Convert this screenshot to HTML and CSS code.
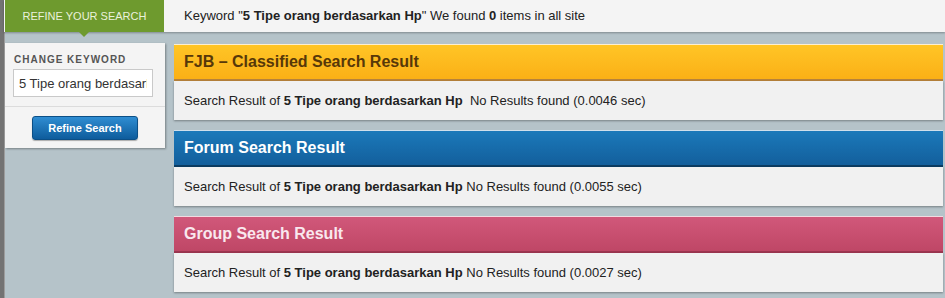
FILE: index.html
```html
<!DOCTYPE html>
<html>
<head>
    <meta charset="utf-8">
    <title>Search Result</title>
    <link rel="stylesheet" href="styles.css">
</head>
<body>
<div class="page">
    <div class="topbar">
        <div class="tab">Refine Your Search</div>
        <div class="summary">Keyword "<b>5 Tipe orang berdasarkan Hp</b>" We found <b>0</b> items in all site</div>
    </div>
    <div class="content">
        <div class="sidebar">
            <div class="keyword-box">
                <h4>Change Keyword</h4>
                <input type="text" value="5 Tipe orang berdasarkan Hp">
            </div>
            <div class="button-row">
                <button>Refine Search</button>
            </div>
        </div>
        <div class="results">
            <div class="result fjb">
                <h2>FJB &ndash; Classified Search Result</h2>
                <p>Search Result of <b>5 Tipe orang berdasarkan Hp</b>&nbsp; No Results found (0.0046 sec)</p>
            </div>
            <div class="result forum">
                <h2>Forum Search Result</h2>
                <p>Search Result of <b>5 Tipe orang berdasarkan Hp</b> No Results found (0.0055 sec)</p>
            </div>
            <div class="result group">
                <h2>Group Search Result</h2>
                <p>Search Result of <b>5 Tipe orang berdasarkan Hp</b> No Results found (0.0027 sec)</p>
            </div>
        </div>
    </div>
</div>
</body>
</html>
```

FILE: styles.css
```css
html, body {
    margin: 0;
    padding: 0;
    height: 100%;
}

body {
    background: #b5c3c9;
    font-family: "Liberation Sans", Arial, sans-serif;
    font-size: 13px;
    color: #222;
    overflow: hidden;
}

.page {
    min-height: 100%;
    border-left: 4px solid #737373;
    box-shadow: inset 1px 0 0 #9c9c9c;
}

/* top bar */
.topbar {
    display: flex;
    height: 32px;
    background: #f4f4f4;
    box-shadow: 0 1px 2px rgba(0, 0, 0, 0.3);
    position: relative;
    z-index: 2;
}

.tab {
    width: 159px;
    margin-left: 1px;
    background: #6e9a2e;
    color: #eaf1dc;
    font-size: 11px;
    text-transform: uppercase;
    text-align: center;
    line-height: 32px;
    position: relative;
}

.tab:after {
    content: "";
    position: absolute;
    left: 74px;
    bottom: -5px;
    border-left: 5px solid transparent;
    border-right: 5px solid transparent;
    border-top: 5px solid #6e9a2e;
}

.summary {
    padding-left: 20px;
    line-height: 32px;
}

/* content */
.content {
    display: flex;
    align-items: flex-start;
    gap: 9px;
    padding-top: 11px;
}

.sidebar {
    width: 160px;
    margin-left: 1px;
    background: #f4f4f4;
    box-shadow: 1px 1px 2px rgba(0, 0, 0, 0.35);
}

.keyword-box {
    padding: 11px 8px 9px;
    border-bottom: 1px solid #dcdcdc;
}

.keyword-box h4 {
    margin: 0 0 3px 1px;
    font-size: 10px;
    line-height: 12px;
    letter-spacing: 1px;
    color: #555;
    text-transform: uppercase;
}

.keyword-box input {
    box-sizing: border-box;
    width: 140px;
    height: 28px;
    margin: 0;
    padding: 0 5px;
    border: 1px solid #c9c9c9;
    background: #fff;
    font-family: "Liberation Sans", Arial, sans-serif;
    font-size: 13px;
    color: #333;
    outline: none;
}

.button-row {
    padding: 9px 0 8px;
    text-align: center;
}

.button-row button {
    width: 106px;
    height: 24px;
    border: 1px solid #0c4f86;
    border-radius: 3px;
    background: linear-gradient(#2f8dd2, #0e5c9c);
    color: #fff;
    font-family: "Liberation Sans", Arial, sans-serif;
    font-size: 11px;
    font-weight: bold;
    box-shadow: 0 1px 1px rgba(0, 0, 0, 0.3);
    cursor: pointer;
}

/* results */
.results {
    flex: 1;
    margin-right: 2px;
    padding-top: 1px;
    display: flex;
    flex-direction: column;
    gap: 10px;
}

.result h2 {
    margin: 0;
    height: 34px;
    padding: 0 10px;
    line-height: 34px;
    font-size: 16px;
    font-weight: bold;
    border-top: 1px solid rgba(255, 255, 255, 0.8);
    border-bottom: 2px solid #000;
}

.result p {
    margin: 0;
    padding: 0 10px;
    height: 39px;
    line-height: 39px;
    background: #f1f1f1;
    box-shadow: 0 1px 2px rgba(0, 0, 0, 0.35);
}

.fjb h2 {
    background: linear-gradient(#ffc526, #fbb016);
    border-bottom-color: #b7823a;
    color: #573809;
}

.forum h2 {
    background: linear-gradient(#1b79ba, #135f9c);
    border-bottom-color: #0b3c62;
    color: #fff;
}

.group h2 {
    background: linear-gradient(#d1587a, #bf4766);
    border-bottom-color: #9c3650;
    color: #f9e8ee;
}
```
